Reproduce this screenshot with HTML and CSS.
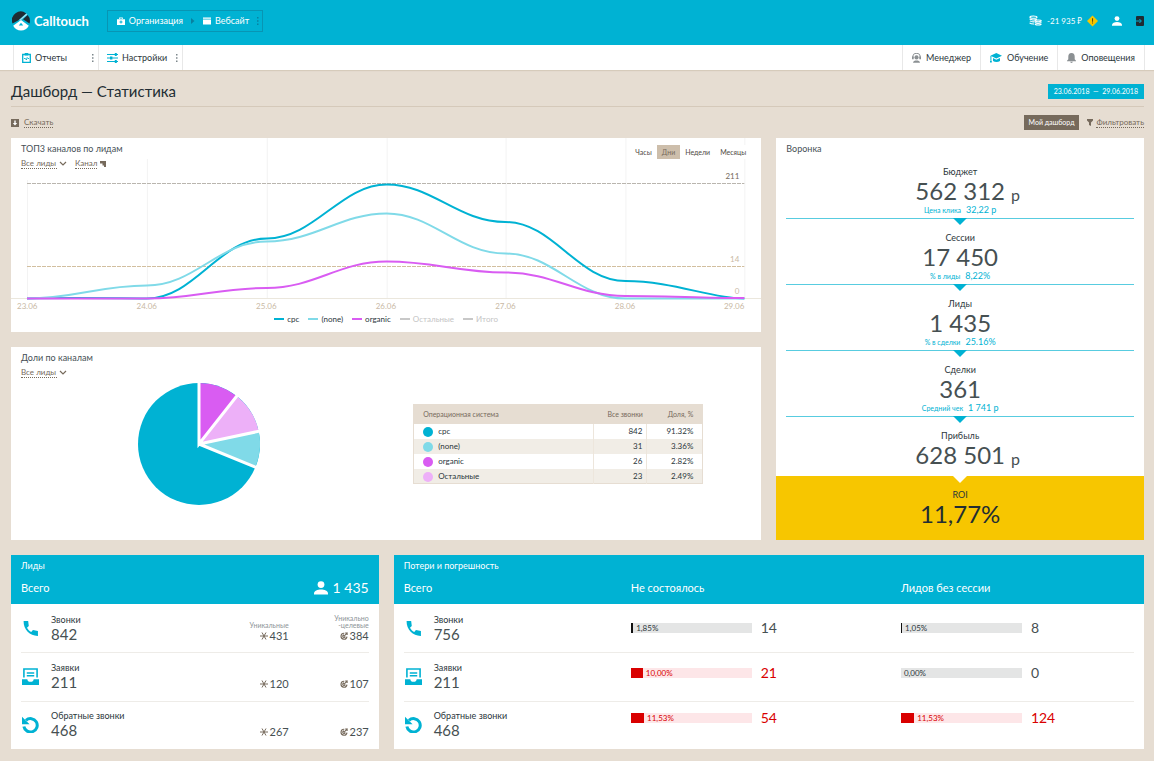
FILE: index.html
```html
<!DOCTYPE html>
<html lang="ru">
<head>
<meta charset="utf-8">
<meta name="viewport" content="width=device-width, initial-scale=1">
<title>Дашборд — Статистика</title>
<link rel="stylesheet" href="styles.css">
</head>
<body>
<svg class="sprite" aria-hidden="true">
  <symbol id="i-user" viewBox="0 0 14 14"><circle cx="7" cy="3.6" r="3.4"/><path d="M0 13.6v-1.2C0 9.8 3.6 8.4 7 8.4s7 1.4 7 4v1.2z"/></symbol>
  <symbol id="i-phone" viewBox="0 0 16 16"><path d="M1.500 1h4.300l.6 4.700-1.700 1.500c.9 1.800 2.200 3.100 4 4l1.600-1.700 4.700.9V15C7.800 15.200 1.300 9.500 1.500 1z"/></symbol>
  <symbol id="i-inbox" viewBox="0 0 16 16"><path d="M1.800 9V1h12.400v8" fill="none" stroke="currentColor" stroke-width="1.500"/><path d="M4.500 4h7v1.400h-7zM4.500 6.600h7V8h-7zM0 10.500h5c0 1.500 1.300 2.500 3 2.500s3-1 3-2.500h5V16H0z"/></symbol>
  <symbol id="i-back" viewBox="0 0 18 18"><path d="M4.200 4.600A7.100 7.100 0 1 1 2 11" fill="none" stroke="currentColor" stroke-width="3.200"/><path d="M0 .8v8h8z"/></symbol>
  <symbol id="i-star" viewBox="0 0 8 8"><path d="M0 4h8M2 .5l4 7M6 .5l-4 7" fill="none" stroke="currentColor" stroke-width="1"/></symbol>
  <symbol id="i-target" viewBox="0 0 8 8"><path d="M4.300 1.200A3 3 0 1 0 7 4.600M4 2.900A1.300 1.300 0 1 0 5.300 4.500M3.800 4.400L7.600.6M6 .3v1.900h1.900" fill="none" stroke="currentColor" stroke-width="1.100"/></symbol>
  <symbol id="i-chevron" viewBox="0 0 8 6"><path d="M1 1l3 3 3-3" fill="none" stroke="currentColor" stroke-width="1.200"/></symbol>
  <symbol id="i-dots" viewBox="0 0 2 8"><path d="M0 0h1.500v1.500H0zM0 3.200h1.500v1.500H0zM0 6.400h1.500v1.500H0z"/></symbol>
</svg>

<header class="topbar">
  <a class="logo" href="#">
    <svg class="logo-mark" viewBox="0 0 18 20" aria-hidden="true">
      <path d="M.5 12.500A8.800 8.800 0 0 1 14.200 2.500L6.500 9.200z" fill="#1f2b33"/>
      <path d="M15.600 3.900A8.800 8.800 0 0 1 17.500 12.500L11 8.300z" fill="#1f2b33"/>
      <path d="M1.200 14.800L9 9l7.800 5.800A8.800 8.800 0 0 1 1.200 14.800z" fill="#fff"/>
      <path d="M14.400 2.600L6.500 9.600l2.500-.6 6.400-5.300z" fill="#9fe0ee"/>
      <path d="M9 11.800l2.200 2.600H6.800z" fill="#00b2d3"/>
    </svg>
    <span>Calltouch</span>
  </a>
  <nav class="crumbs" aria-label="Организация и сайт">
    <a class="crumb" href="#"><svg class="ic8" viewBox="0 0 8 8" aria-hidden="true"><path d="M0 2.200h8V8H0zM2.200 2V.4h3.600V2h-1V1.300H3.200V2z" fill="#fff"/><path d="M3.500 3.500h1v1h1v1h-1v1h-1v-1h-1v-1h1z" fill="#00b2d3"/></svg>Организация</a>
    <svg class="crumb-arrow" viewBox="0 0 4 6" aria-hidden="true"><path d="M0 0l3.500 3L0 6z" fill="#0781a0"/></svg>
    <a class="crumb" href="#"><svg class="ic8" viewBox="0 0 8 8" aria-hidden="true"><path d="M0 .5h8v1.300H0zM0 2.400h8V7.500H0z" fill="#fff"/></svg>Вебсайт</a>
    <button class="dots dots-dark" aria-label="Ещё"><svg viewBox="0 0 2 8" aria-hidden="true"><use href="#i-dots"/></svg></button>
  </nav>
  <div class="account">
    <a class="balance" href="#">
      <svg class="coins" viewBox="0 0 14 11" aria-hidden="true"><g fill="none" stroke="#fff" stroke-width="1.200"><ellipse cx="4.800" cy="1.900" rx="3.800" ry="1.200"/><path d="M.6 3.800c1.500 1.300 5.500 1.500 8 .4M1 5.900c1.300 1 3 1.200 5 1M.6 8c1.500 1.200 3 1.300 5 1.200"/><ellipse cx="9.800" cy="5.900" rx="3.400" ry="1"/><path d="M6.400 7.700c1.500 1.200 5 1.200 7 0M6.400 9.500c1.500 1.200 5 1.200 7 0"/></g></svg>
      -21 935 ₽
      <svg class="warn" viewBox="0 0 12 12" aria-hidden="true"><path d="M6 0l6 6-6 6-6-6z" fill="#f7c600"/><path d="M5.500 3h1.100v3.700H5.500zM5.500 7.600h1.100v1.200H5.500z" fill="#5a4a10"/></svg>
    </a>
    <a class="profile" href="#" aria-label="Профиль"><svg viewBox="0 0 14 14" aria-hidden="true"><use href="#i-user"/></svg></a>
    <a class="exit" href="#" aria-label="Выход"><svg viewBox="0 0 8 10" aria-hidden="true"><path d="M1 0h6a1 1 0 0 1 1 1v8a1 1 0 0 1-1 1H1a1 1 0 0 1-1-1V1a1 1 0 0 1 1-1z" fill="#1f2b33"/><path d="M0 5h5M3.400 3l2 2-2 2" fill="none" stroke="#00b2d3"/></svg></a>
  </div>
</header>

<nav class="menubar" aria-label="Меню">
  <div class="menu-item menu-left">
    <a href="#"><svg class="ic9" viewBox="0 0 9 10" aria-hidden="true"><path d="M.7 1.500h7.600v7.800H.7z" fill="none" stroke="#00b2d3" stroke-width="1.300"/><path d="M2.700 0h3.600v2.500H2.700z" fill="#00b2d3"/><path d="M2 5.500h1.400l1 1.500.8-2.500.8 1h1" fill="none" stroke="#00b2d3" stroke-width=".9"/></svg>Отчеты</a>
    <button class="dots" aria-label="Ещё"><svg viewBox="0 0 2 8" aria-hidden="true"><use href="#i-dots"/></svg></button>
  </div>
  <div class="menu-item menu-left">
    <a href="#"><svg class="ic11" viewBox="0 0 11 10" aria-hidden="true"><path d="M0 1.500h11M0 5h11M0 8.500h11" stroke="#00b2d3" stroke-width="1.200"/><path d="M7.800 0h2v3h-2zM3 3.400h2.400v3.200H3zM7.800 7h2v3h-2z" fill="#00b2d3"/></svg>Настройки</a>
    <button class="dots" aria-label="Ещё"><svg viewBox="0 0 2 8" aria-hidden="true"><use href="#i-dots"/></svg></button>
  </div>
  <div class="menu-right">
    <a class="menu-item" href="#"><svg class="ic9" viewBox="0 0 9 10" aria-hidden="true"><g fill="#8b9093"><path d="M.8 5V4a3.700 3.700 0 0 1 7.400 0v1" fill="none" stroke="#8b9093" stroke-width="1.100"/><path d="M0 3.600h1.700v2.600H0zM7.300 3.600H9v2.600H7.300z"/><circle cx="4.500" cy="4.400" r="2.100"/><path d="M1 9.800C1 8 2.800 7.400 4.500 7.400S8 8 8 9.800z"/></g></svg>Менеджер</a>
    <a class="menu-item" href="#"><svg class="ic12" viewBox="0 0 12 10" aria-hidden="true"><path d="M6.300 0L12 2.800 6.300 5.600.4 2.800zM3 5.100l3.300 1.600L10 5v3c-2 1.400-5 1.400-7 0zM.4 3h1v4h-1zM0 7.600h1.800v2H0z" fill="#00b2d3"/></svg>Обучение</a>
    <a class="menu-item" href="#"><svg class="ic9" viewBox="0 0 9 10" aria-hidden="true"><path d="M4.500 0c2.300 0 3.200 1.700 3.200 3.700v2.500L9 7.700v.6H0v-.6l1.300-1.500V3.700C1.300 1.700 2.200 0 4.500 0zM3.200 8.800h2.600c0 .7-.6 1.200-1.300 1.200s-1.300-.5-1.300-1.200z" fill="#8b9093"/></svg>Оповещения</a>
  </div>
</nav>

<main class="page">
  <div class="title-row">
    <h1>Дашборд — Статистика</h1>
    <button class="range">23.06.2018 &nbsp;—&nbsp; 29.06.2018</button>
  </div>
  <div class="toolbar">
    <a class="tool" href="#"><svg class="ic8" viewBox="0 0 8 8" aria-hidden="true"><path d="M0 0h8v8H0z" fill="#766a5c"/><path d="M3.300 1.500h1.400V4h1.500L4 6.500 1.800 4h1.500z" fill="#fff"/></svg><span class="dotted">Скачать</span></a>
    <div class="tools-right">
      <button class="my-board">Мой дашборд</button>
      <a class="tool tool-filter" href="#"><svg class="ic6" viewBox="0 0 6 7" aria-hidden="true"><path d="M0 0h6v1.500L4 3.500V7L2 6V3.500L0 1.500z" fill="#766a5c"/></svg><span class="dotted">Фильтровать</span></a>
    </div>
  </div>

  <div class="board">
    <section class="card chart-card">
      <svg class="plot" viewBox="0 0 751 194" preserveAspectRatio="none" aria-hidden="true">
        <path class="grid" d="M16.500 42v118M136.500 21v139M256.500 0v160M376.500 0v160M495.500 0v160M615.500 0v160M734.500 0v160"/>
        <path class="axis" d="M0 160.500H751"/>
        <path class="limit" d="M16 45.500H734"/>
        <path class="limit limit-low" d="M16 128.500H734"/>
        <path class="line cpc" d="M16 160.500C50 159.500 90 160 136 160.500C184 160.500 208 100.500 256 100.500S330 46.500 376 46.500S447 84 495 84S567 143 615 143S700 160.500 734 160.500"/>
        <path class="line none" d="M16 160.500C64 160.500 88 147.500 136 147.500S208 103.500 256 103.500S330 75.500 376 75.500S447 115.500 495 115.500S567 160.500 615 160.500H734"/>
        <path class="line organic" d="M16 160.500H136C184 160.500 208 150 256 150S328 123.500 376 123.500S447 134.500 495 134.500S567 158 615 158S700 160 734 160"/>
      </svg>
      <div class="chart-head">
        <div>
          <h2>ТОП3 каналов по лидам</h2>
          <div class="filters">
            <label class="picker"><select aria-label="Лиды"><option>Все лиды</option></select><svg class="chev" viewBox="0 0 8 6" aria-hidden="true"><use href="#i-chevron"/></svg></label>
            <button class="sorter"><span class="dotted">Канал</span><svg viewBox="0 0 6 6" aria-hidden="true"><path d="M0 0h6v6H4V4.500H2.500V2.500H0z" fill="#766a5c"/></svg></button>
          </div>
        </div>
        <div class="periods">
          <button>Часы</button><button class="on">Дни</button><button>Недели</button><button>Месяцы</button>
        </div>
      </div>
      <div class="y-labels"><span class="max">211</span><span>14</span><span>0</span></div>
      <div class="x-labels"><span>23.06</span><span>24.06</span><span>25.06</span><span>26.06</span><span>27.06</span><span>28.06</span><span>29.06</span></div>
      <div class="legend">
        <span class="cpc">cpc</span><span class="none">(none)</span><span class="organic">organic</span><span class="off">Остальные</span><span class="off">Итого</span>
      </div>
    </section>

    <section class="card funnel">
      <h2>Воронка</h2>
      <div class="steps">
        <div class="step"><h3>Бюджет</h3><p class="big">562 312<small>р</small></p><p class="sub">Цена клика <b>32,22 р</b></p></div>
        <div class="step"><h3>Сессии</h3><p class="big">17 450</p><p class="sub">% в лиды <b>8,22%</b></p></div>
        <div class="step"><h3>Лиды</h3><p class="big">1 435</p><p class="sub">% в сделки <b>25.16%</b></p></div>
        <div class="step"><h3>Сделки</h3><p class="big">361</p><p class="sub">Средний чек <b>1 741 р</b></p></div>
        <div class="step last"><h3>Прибыль</h3><p class="big">628 501<small>р</small></p></div>
      </div>
      <div class="roi"><h3>ROI</h3><p class="big">11,77%</p></div>
    </section>

    <section class="card share-card">
      <h2>Доли по каналам</h2>
      <div class="filters">
        <label class="picker"><select aria-label="Лиды по каналам"><option>Все лиды</option></select><svg class="chev" viewBox="0 0 8 6" aria-hidden="true"><use href="#i-chevron"/></svg></label>
      </div>
      <div class="share-body">
        <svg class="pie" viewBox="-61 -61 122 122" role="img" aria-label="Доли по каналам">
          <circle r="61" fill="#00b2d3"/>
          <path d="M0 0V-61A61 61 0 0 1 37.900-47.800z" fill="#d95cf2"/>
          <path d="M0 0L37.900-47.800A61 61 0 0 1 59.700-12.700z" fill="#edb0f8"/>
          <path d="M0 0L59.700-12.700A61 61 0 0 1 56.400 23.200z" fill="#80dae8"/>
          <path d="M0-62V0L39-49.500M0 0L61-13M0 0L58 23.900" fill="none" stroke="#fff" stroke-width="3"/>
        </svg>
        <div class="share-table">
          <table>
            <thead><tr><th scope="col">Операционная система</th><th scope="col">Все звонки</th><th scope="col">Доля, %</th></tr></thead>
            <tbody>
              <tr><td><i class="dot cpc"></i>cpc</td><td>842</td><td>91.32%</td></tr>
              <tr><td><i class="dot none"></i>(none)</td><td>31</td><td>3.36%</td></tr>
              <tr><td><i class="dot organic"></i>organic</td><td>26</td><td>2.82%</td></tr>
              <tr><td><i class="dot rest"></i>Остальные</td><td>23</td><td>2.49%</td></tr>
            </tbody>
          </table>
        </div>
      </div>
    </section>

    <section class="card leads">
      <div class="blue-head">
        <h2>Лиды</h2>
        <div class="totals"><span>Всего</span><span class="sum"><svg viewBox="0 0 14 14" aria-hidden="true"><use href="#i-user"/></svg>1 435</span></div>
      </div>
      <div class="lead-rows ruled">
        <div class="lead">
          <svg class="kind" viewBox="0 0 16 16" aria-hidden="true"><use href="#i-phone"/></svg>
          <div class="count"><h3>Звонки</h3><p>842</p></div>
          <div class="stat"><span>Уникальные</span><p><svg viewBox="0 0 8 8" aria-hidden="true"><use href="#i-star"/></svg>431</p></div>
          <div class="stat"><span>Уникально<br>-целевые</span><p><svg viewBox="0 0 8 8" aria-hidden="true"><use href="#i-target"/></svg>384</p></div>
        </div>
        <div class="lead">
          <svg class="kind" viewBox="0 0 16 16" aria-hidden="true"><use href="#i-inbox"/></svg>
          <div class="count"><h3>Заявки</h3><p>211</p></div>
          <div class="stat"><p><svg viewBox="0 0 8 8" aria-hidden="true"><use href="#i-star"/></svg>120</p></div>
          <div class="stat"><p><svg viewBox="0 0 8 8" aria-hidden="true"><use href="#i-target"/></svg>107</p></div>
        </div>
        <div class="lead">
          <svg class="kind" viewBox="0 0 18 18" aria-hidden="true"><use href="#i-back"/></svg>
          <div class="count"><h3>Обратные звонки</h3><p>468</p></div>
          <div class="stat"><p><svg viewBox="0 0 8 8" aria-hidden="true"><use href="#i-star"/></svg>267</p></div>
          <div class="stat"><p><svg viewBox="0 0 8 8" aria-hidden="true"><use href="#i-target"/></svg>237</p></div>
        </div>
      </div>
    </section>

    <section class="card losses">
      <div class="blue-head">
        <h2>Потери и погрешность</h2>
        <div class="totals loss-grid"><span>Всего</span><span>Не состоялось</span><span>Лидов без сессии</span></div>
      </div>
      <div class="loss-grid ruled">
        <div>
          <div class="lead"><svg class="kind" viewBox="0 0 16 16" aria-hidden="true"><use href="#i-phone"/></svg><div class="count"><h3>Звонки</h3><p>756</p></div></div>
          <div class="lead"><svg class="kind" viewBox="0 0 16 16" aria-hidden="true"><use href="#i-inbox"/></svg><div class="count"><h3>Заявки</h3><p>211</p></div></div>
          <div class="lead"><svg class="kind" viewBox="0 0 18 18" aria-hidden="true"><use href="#i-back"/></svg><div class="count"><h3>Обратные звонки</h3><p>468</p></div></div>
        </div>
        <div class="bars">
          <div class="bar"><div class="track"><i style="width:2%"></i>1,85%</div><b>14</b></div>
          <div class="bar bad"><div class="track"><i style="width:10%"></i>10,00%</div><b>21</b></div>
          <div class="bar bad"><div class="track"><i style="width:11%"></i>11,53%</div><b>54</b></div>
        </div>
        <div class="bars">
          <div class="bar"><div class="track"><i style="width:1%"></i>1,05%</div><b>8</b></div>
          <div class="bar"><div class="track"><i style="width:0%"></i>0,00%</div><b>0</b></div>
          <div class="bar bad"><div class="track"><i style="width:11%"></i>11,53%</div><b>124</b></div>
        </div>
      </div>
    </section>
  </div>
</main>
</body>
</html>
```
FILE: styles.css
```css
:root {
  --blue: #00b2d3;
  --light-blue: #80dae8;
  --violet: #d95cf2;
  --pink: #edb0f8;
  --sand: #e6ddd2;
  --brown: #766a5c;
  --ink: #2b363b;
  --tan: #c9b9a4;
}
* { box-sizing: border-box; margin: 0; padding: 0; }
body {
  background: var(--sand);
  color: var(--ink);
  font: 9px/14px Lato, "Noto Sans", sans-serif;
}
a { color: inherit; text-decoration: none; }
button, select { font: inherit; color: inherit; background: none; border: 0; cursor: pointer; }
h1, h2, h3 { font-weight: 400; }
h2 { font-size: 9px; line-height: 14px; color: #465055; }
svg { display: block; flex: none; fill: currentColor; }
.sprite { position: absolute; width: 0; height: 0; }
.ic6 { width: 6px; height: 7px; }
.ic8 { width: 8px; height: 8px; }
.ic9 { width: 9px; height: 10px; }
.ic11 { width: 11px; height: 10px; }
.ic12 { width: 12px; height: 10px; }
.dots { display: flex; padding: 2px; color: #7d878c; }
.dots svg { width: 2px; height: 8px; }
.dots-dark { color: #0781a0; }
.dotted { border-bottom: 1px dotted var(--brown); line-height: 9px; }

/* top bar */
.topbar {
  display: flex;
  align-items: center;
  height: 45px;
  padding: 0 10px 4px 12px;
  background: var(--blue);
  color: #fff;
}
.logo { display: flex; align-items: center; gap: 4px; font-weight: 700; font-size: 13px; line-height: 18px; }
.logo-mark { width: 18px; height: 20px; }
.crumbs {
  display: flex;
  align-items: center;
  height: 22px;
  margin-left: 18px;
  padding: 0 1px 0 9px;
  border: 1px solid #0895b3;
}
.crumb { display: flex; align-items: center; gap: 4px; }
.crumb-arrow { width: 4px; height: 6px; margin: 0 8px; }
.crumbs .dots { margin-left: 6px; }
.account { display: flex; align-items: center; gap: 14px; margin-left: auto; }
.balance { display: flex; align-items: center; gap: 5px; font-size: 8px; }
.coins { width: 13px; height: 11px; }
.warn { width: 11px; height: 12px; }
.profile svg { width: 10px; height: 10px; }
.exit svg { width: 8px; height: 10px; }

/* menu */
.menubar {
  display: flex;
  height: 25px;
  padding: 0 9px 0 13px;
  background: #fff;
  box-shadow: 0 1px 1px #d6cbbb;
}
.menu-item { display: flex; align-items: center; gap: 5px; border-left: 1px solid #e8e8e8; }
.menu-left { justify-content: space-between; width: 85px; padding: 0 2px 0 8px; }
.menu-left + .menu-left { border-right: 1px solid #e8e8e8; }
.menu-left a { display: flex; align-items: center; gap: 4px; }
.menu-right { display: flex; margin-left: auto; border-right: 1px solid #e8e8e8; }
.menu-right .menu-item { padding: 0 9px; }

/* page head */
.page { padding: 0 10px 12px 11px; }
.title-row {
  display: flex;
  align-items: center;
  justify-content: space-between;
  height: 37px;
  padding-top: 6px;
  border-bottom: 1px solid #d5c9ba;
}
h1 { font-size: 15px; line-height: 20px; color: #222d33; }
.range { height: 15px; padding: 0 6px; background: var(--blue); color: #fff; font-size: 7px; line-height: 15px; }
.toolbar { display: flex; align-items: center; justify-content: space-between; height: 31px; font-size: 8px; color: var(--brown); }
.tool { display: flex; align-items: center; gap: 5px; }
.tool-filter { gap: 3px; }
.tools-right { display: flex; align-items: center; gap: 8px; }
.my-board { height: 15px; padding: 0 5px; background: var(--brown); color: #fff; font-size: 7px; line-height: 15px; }

/* cards */
.board { display: grid; grid-template-columns: repeat(3, 1fr); grid-template-rows: 194px 193px auto; gap: 15px; }
.card { position: relative; background: #fff; min-width: 0; }
.chart-card, .share-card { grid-column: span 2; }
.filters { display: flex; gap: 8px; font-size: 8px; color: var(--brown); }
.picker { display: flex; align-items: center; gap: 2px; }
.picker select { appearance: none; height: 10px; line-height: 9px; border-bottom: 1px dotted var(--brown); }
.chev { width: 8px; height: 6px; }
.sorter { display: flex; align-items: center; gap: 3px; }
.sorter svg { width: 6px; height: 6px; }

/* line chart */
.plot { position: absolute; inset: 0; width: 100%; height: 100%; fill: none; }
.plot path { vector-effect: non-scaling-stroke; }
.grid { stroke: #f3f3f3; }
.axis { stroke: #ebe7dd; }
.limit { stroke: #b9b5ae; stroke-dasharray: 4 1; }
.limit-low { stroke: #d2bf9f; }
.line { stroke-width: 2; }
.line.cpc { stroke: var(--blue); }
.line.none { stroke: var(--light-blue); }
.line.organic { stroke: var(--violet); }
.chart-head { position: relative; display: flex; justify-content: space-between; height: 32px; padding: 4px 10px 0; }
.chart-head h2 { height: 17px; }
.periods { display: flex; padding-top: 3px; font-size: 7px; }
.periods button { height: 14px; padding: 0 5px; background: #fff; line-height: 14px; color: #4f4a43; }
.periods .on { background: #cdbeab; color: var(--brown); }
.y-labels {
  position: relative;
  display: grid;
  grid-template-rows: 83px 32px 15px;
  padding-right: 22px;
  text-align: right;
  font-size: 8px;
  line-height: 12px;
  color: var(--tan);
}
.y-labels .max { color: var(--brown); }
.x-labels {
  position: relative;
  display: grid;
  grid-template-columns: repeat(6, 1fr) 10px;
  padding: 0 17px 0 6px;
  font-size: 8px;
  line-height: 13px;
  color: var(--tan);
}
.x-labels span:last-child { justify-self: end; }
.legend { position: relative; display: flex; justify-content: center; gap: 9px; font-size: 8px; line-height: 12px; }
.legend span { display: flex; align-items: center; gap: 3px; }
.legend span::before { content: ""; width: 10px; height: 2px; background: #c8c8c8; }
.legend .cpc::before, .dot.cpc { background: var(--blue); }
.legend .none::before, .dot.none { background: var(--light-blue); }
.legend .organic::before, .dot.organic { background: var(--violet); }
.dot.rest { background: var(--pink); }
.legend .off { color: #c4c4c4; }

/* pie and table */
.share-card { display: flex; flex-direction: column; padding: 4px 0 0; }
.share-card h2, .share-card .filters { padding: 0 10px; }
.share-card h2 { height: 17px; }
.share-body { display: grid; grid-template-columns: 1fr 1fr; align-items: start; }
.pie { width: 122px; height: 122px; justify-self: center; margin-top: 5px; }
.share-table { padding: 26px 58px 0 27px; }
table { width: 100%; border-collapse: collapse; font-size: 8px; line-height: 14px; border: 1px solid var(--sand); }
th { height: 19px; padding: 0 9px; background: var(--sand); color: var(--brown); font-size: 7px; font-weight: 400; text-align: right; white-space: nowrap; }
td { height: 15px; padding: 0 9px; text-align: right; }
td + td { border-left: 1px solid #ede6dc; }
th:first-child, td:first-child { text-align: left; }
th:nth-child(2), td:nth-child(2) { width: 53px; padding: 0 4px; }
th:nth-child(3), td:nth-child(3) { width: 56px; }
tbody tr:nth-child(even) { background: #f1ede6; }
.dot { display: inline-block; width: 10px; height: 10px; margin-right: 5px; border-radius: 50%; vertical-align: middle; }

/* funnel */
.funnel { grid-column: 3; grid-row: 1 / 3; display: flex; flex-direction: column; text-align: center; }
.funnel h2 { height: 18px; padding: 4px 10px 0; text-align: left; }
.funnel h3 { font-size: 9px; line-height: 14px; color: var(--ink); }
.steps { flex: 1; padding: 0 10px; }
.step { position: relative; padding: 12px 0 1px; border-bottom: 1px solid #58cce0; }
.step:first-child { padding-top: 9px; }
.step::after, .roi::before {
  content: "";
  position: absolute;
  top: 100%;
  left: calc(50% - 7px);
  border: 7px solid transparent;
  border-top-color: var(--blue);
  border-bottom: 0;
}
.step.last { border: 0; }
.step.last::after { display: none; }
.big { font-size: 24px; line-height: 24px; color: #465052; }
.big small { position: absolute; margin: 4px 0 0 6px; font-size: 16px; }
.sub { display: flex; justify-content: center; gap: 5px; font-size: 7px; line-height: 14px; color: var(--blue); }
.sub b { font-size: 9px; font-weight: 400; }
.roi { position: relative; padding: 12px 0 14px; background: #f7c600; }
.roi::before { top: 0; border-top-color: #fff; }
.roi .big { color: #222d33; }

/* bottom cards */
.losses { grid-column: span 2; }
.blue-head { height: 49px; padding: 4px 10px 0; background: var(--blue); color: #fff; }
.blue-head h2 { color: #fff; }
.totals { display: flex; justify-content: space-between; align-items: center; height: 30px; font-size: 11px; }
.sum { display: flex; align-items: center; gap: 5px; font-size: 14px; }
.sum svg { width: 14px; height: 14px; }
.ruled {
  height: 145px;
  margin: 0 10px;
  background: repeating-linear-gradient(#fff 0 48px, #eeece8 48px 49px);
}
.lead { display: flex; height: 48px; padding-top: 9px; }
.kind { width: 17px; height: 17px; margin: 7px 12px 0 1px; color: var(--blue); }
.count { flex: 1; }
.count h3 { font-size: 9px; line-height: 14px; }
.count p { font-size: 15px; line-height: 14px; color: #465052; }
.stat { display: flex; flex-direction: column; justify-content: flex-end; width: 80px; height: 30px; text-align: right; font-size: 7px; line-height: 7px; color: #8d9497; }
.stat p { display: flex; justify-content: flex-end; align-items: center; gap: 2px; font-size: 11px; line-height: 14px; color: #465052; }
.stat p svg { width: 8px; height: 8px; color: var(--brown); }
.loss-grid { display: grid; grid-template-columns: 227fr 270fr 233fr; }
.bars { padding-top: 1px; }
.bar { display: flex; align-items: center; gap: 9px; height: 45px; }
.track { display: flex; align-items: center; gap: 3px; width: 121px; height: 10px; background: #e4e5e5; font-size: 8px; line-height: 10px; }
.track i { align-self: stretch; background: #111; }
.bar b { font-size: 14px; font-weight: 400; color: #465052; }
.bad .track { background: #fde6e8; color: #d90000; }
.bad .track i { background: #d90000; }
.bad b { color: #d90000; }
```
